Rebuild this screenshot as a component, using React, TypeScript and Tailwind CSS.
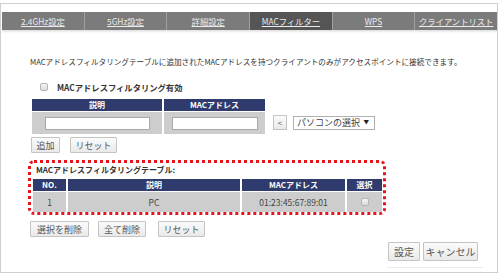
import React from 'react';

const tabs = ['2.4GHz設定', '5GHz設定', '詳細設定', 'MACフィルター', 'WPS', 'クライアントリスト'];

const Btn: React.FC<{ label: string; w: string; big?: boolean }> = ({ label, w, big }) => (
  <button
    className={`${w} ${big ? 'h-[19px] text-[10px]' : 'h-[16px] text-[9px]'} flex items-center justify-center border border-[#c4c4c4] bg-gradient-to-b from-[#fbfbfb] to-[#e9e9e9] text-[#555] leading-none rounded-[1px]`}
  >
    {label}
  </button>
);

const Check: React.FC = () => (
  <span className="block w-[8px] h-[8px] rounded-[2px] border border-[#b5b5b5] bg-gradient-to-b from-[#f4f4f4] to-[#dcdcdc]" />
);

export default function App() {
  return (
    <div
      className="w-[500px] h-[275px] bg-white pt-[3px] text-[#333]"
      style={{ fontFamily: '"Noto Sans CJK JP", "Noto Sans", sans-serif' }}
    >
      <div className="w-[498px] h-[270px] border border-[#cfcfcf] flex flex-col">
        {/* Tabs */}
        <div className="mt-[8px] ml-[1px] w-[495px] h-[18px] flex bg-[#7b7b7b]">
          {tabs.map((t, i) => (
            <div
              key={t}
              className={`flex-1 flex items-center justify-center text-[8.3px] underline text-[#ececec] ${
                i === 3 ? 'bg-[#555555]' : ''
              } ${i < tabs.length - 1 ? 'border-r border-[#a0a0a0]' : ''}`}
            >
              {t}
            </div>
          ))}
        </div>
        <div className="ml-[1px] w-[495px] h-[3px] bg-gradient-to-b from-[#dedede] to-white" />

        <div className="pl-[29px] flex flex-col">
          <p className="mt-[24px] text-[7.6px] leading-[10px] whitespace-nowrap">
            MACアドレスフィルタリングテーブルに追加されたMACアドレスを持つクライアントのみがアクセスポイントに接続できます。
          </p>

          <div className="mt-[15px] ml-[10px] flex items-center h-[10px]">
            <Check />
            <span className="ml-[9px] text-[8.3px] font-bold leading-none">MACアドレスフィルタリング有効</span>
          </div>

          {/* Input table */}
          <div className="mt-[7px] ml-[2px] flex items-start">
            <div className="grid grid-cols-[130px_101px] gap-x-[2px] gap-y-[1px]">
              <div className="h-[12px] bg-[#2e3b6c] text-white text-[8px] font-bold flex items-center justify-center">説明</div>
              <div className="h-[12px] bg-[#2e3b6c] text-white text-[8px] font-bold flex items-center justify-center">MACアドレス</div>
              <div className="h-[22px] bg-[#cdcdcd] flex items-center justify-center">
                <div className="w-[105px] h-[13px] bg-white border border-[#a9a9a9]" />
              </div>
              <div className="h-[22px] bg-[#cdcdcd] flex items-center justify-center">
                <div className="w-[86px] h-[13px] bg-white border border-[#a9a9a9]" />
              </div>
            </div>
            <div className="mt-[16px] ml-[8px] flex items-center">
              <button className="w-[14px] h-[15px] border border-[#c4c4c4] bg-gradient-to-b from-[#fbfbfb] to-[#e9e9e9] text-[8px] text-[#555] flex items-center justify-center leading-none">
                &lt;
              </button>
              <div className="ml-[6px] w-[82px] h-[14px] border border-[#b0b0b0] bg-white flex items-center justify-between pl-[3px] pr-[5px]">
                <span className="text-[9px] leading-none text-[#444]">パソコンの選択</span>
                <span className="text-[5.5px] leading-none text-[#222]">▼</span>
              </div>
            </div>
          </div>

          <div className="mt-[3px] ml-[1px] flex gap-[10px]">
            <Btn label="追加" w="w-[29px]" />
            <Btn label="リセット" w="w-[47px]" />
          </div>

          {/* MAC table */}
          <div className="mt-[7px] -ml-[2px] w-[358px] h-[55px] border-[3px] border-dotted border-[#e8141c] rounded-[6px] pl-[2px] pt-[1px]">
            <p className="ml-[3px] h-[12px] text-[8px] font-bold leading-[12px]">MACアドレスフィルタリングテーブル:</p>
            <div className="mt-[3px] grid grid-cols-[33px_172px_103px_35px] gap-x-[2px] gap-y-[1px]">
              {['NO.', '説明', 'MACアドレス', '選択'].map((h) => (
                <div key={h} className="h-[12px] bg-[#2e3b6c] text-white text-[8px] font-bold flex items-center justify-center">
                  {h}
                </div>
              ))}
              <div className="h-[20px] bg-[#cdcdcd] text-[8.5px] text-[#444] flex items-center justify-center">1</div>
              <div className="h-[20px] bg-[#cdcdcd] text-[8.5px] text-[#444] flex items-center justify-center">PC</div>
              <div className="h-[20px] bg-[#cdcdcd] text-[8.5px] text-[#444] flex items-center justify-center">01:23:45:67:89:01</div>
              <div className="h-[20px] bg-[#cdcdcd] flex items-center justify-center">
                <Check />
              </div>
            </div>
          </div>

          <div className="mt-[6px] flex">
            <Btn label="選択を削除" w="w-[59px]" />
            <div className="ml-[9px]">
              <Btn label="全て削除" w="w-[48px]" />
            </div>
            <div className="ml-[12px]">
              <Btn label="リセット" w="w-[47px]" />
            </div>
          </div>
        </div>

        <div className="mt-[5px] pr-[19px] flex justify-end gap-[3px]">
          <Btn label="設定" w="w-[32px]" big />
          <Btn label="キャンセル" w="w-[55px]" big />
        </div>
        <div className="mt-[6px] ml-[386px] w-[96px] h-px bg-[#ececec]" />
      </div>
    </div>
  );
}
